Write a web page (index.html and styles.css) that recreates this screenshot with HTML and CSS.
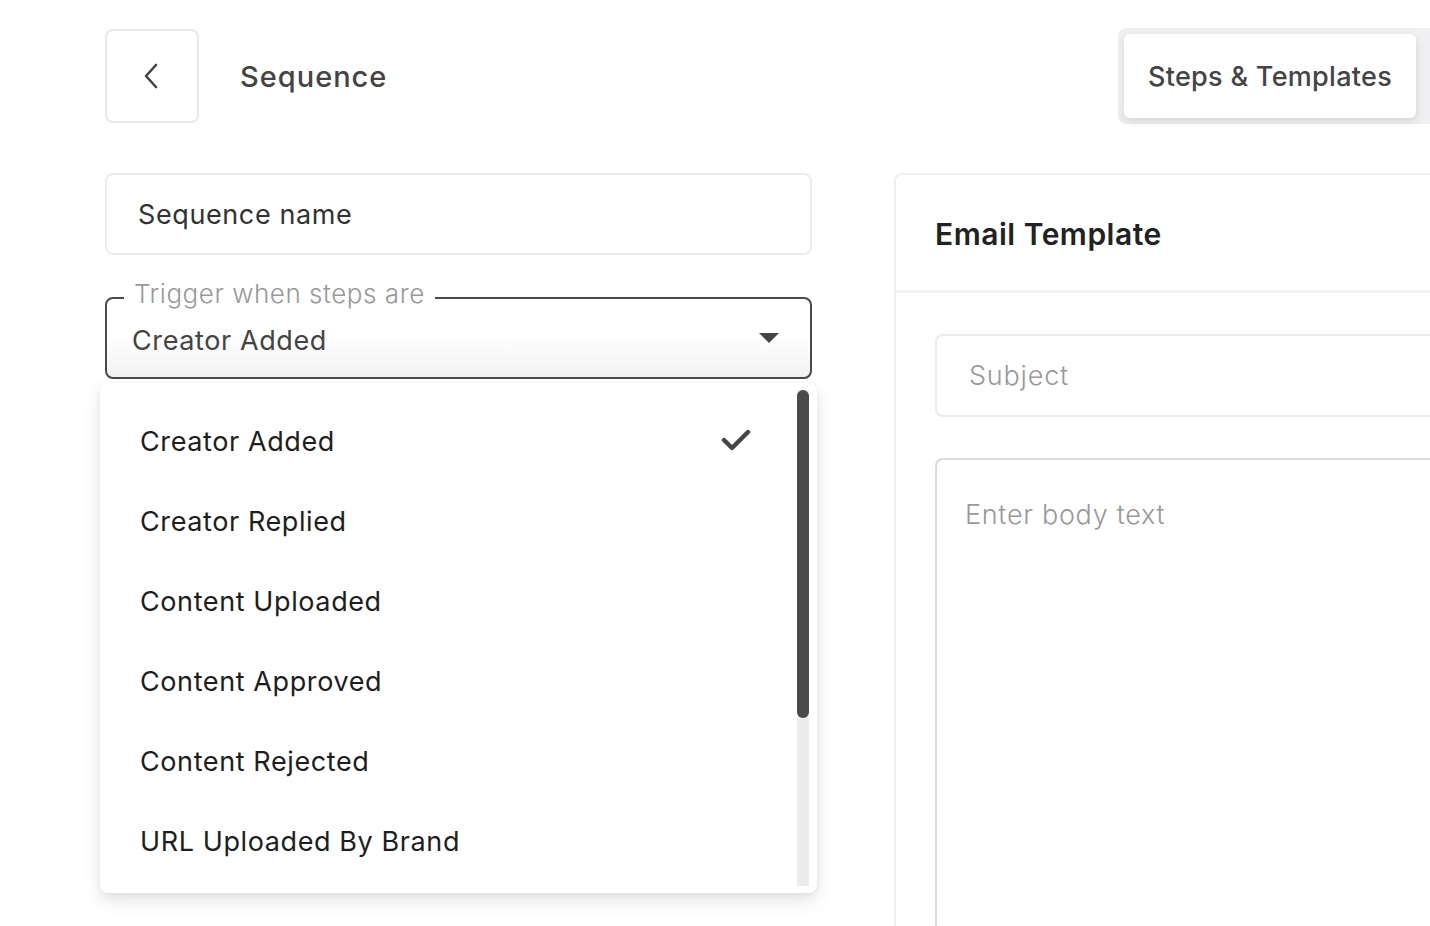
FILE: index.html
```html
<!DOCTYPE html>
<html>
<head>
<meta charset="utf-8">
<link rel="stylesheet" href="styles.css">
</head>
<body>
<div class="page">
  <header class="header">
    <button class="back-btn" aria-label="Back">
      <svg width="18" height="28" viewBox="0 0 18 28"><path d="M13 3 L3 14 L13 25" fill="none" stroke="#444" stroke-width="2.6" stroke-linecap="round" stroke-linejoin="round"/></svg>
    </button>
    <h1 class="title">Sequence</h1>
    <div class="tabs">
      <div class="tab active">Steps &amp; Templates</div>
    </div>
  </header>
  <main class="content">
    <section class="left">
      <div class="input">Sequence name</div>
      <div class="select-wrap">
        <div class="select">
          <span class="select-label">Trigger when steps are</span>
          <span class="select-value">Creator Added</span>
          <svg class="caret" width="20" height="10" viewBox="0 0 20 10"><path d="M0 0 L20 0 L10 10 Z" fill="#444"/></svg>
        </div>
        <div class="menu">
          <ul class="menu-list">
            <li class="menu-item selected">Creator Added
              <svg class="check" width="30" height="24" viewBox="0 0 30 24"><path d="M3 12 L11 20 L27 4" fill="none" stroke="#444" stroke-width="4.4" stroke-linecap="round" stroke-linejoin="round"/></svg>
            </li>
            <li class="menu-item">Creator Replied</li>
            <li class="menu-item">Content Uploaded</li>
            <li class="menu-item">Content Approved</li>
            <li class="menu-item">Content Rejected</li>
            <li class="menu-item">URL Uploaded By Brand</li>
          </ul>
          <div class="scroll-track"><div class="scroll-thumb"></div></div>
        </div>
      </div>
    </section>
    <section class="panel">
      <div class="panel-head">Email Template</div>
      <div class="panel-body">
        <div class="field subject">Subject</div>
        <div class="field body-text">Enter body text</div>
      </div>
    </section>
  </main>
</div>
</body>
</html>
```
FILE: styles.css
```css
* { box-sizing: border-box; }
html, body { margin: 0; padding: 0; background: #fff; }
body {
  width: 1430px;
  height: 926px;
  overflow: hidden;
  font-family: Inter, "Noto Sans", sans-serif;
  color: #333;
}
.page {
  padding: 28px 0 0 105px;
}
.header {
  display: flex;
  align-items: center;
  height: 96px;
  margin-right: -20px;
}
.back-btn {
  width: 94px;
  height: 94px;
  border: 2px solid #e6e8ec;
  border-radius: 8px;
  background: #fff;
  display: flex;
  align-items: center;
  justify-content: center;
  padding: 0;
}
.title {
  margin: 0 0 0 41px;
  font-size: 29px;
  font-weight: 500;
  letter-spacing: 1px;
  color: #444;
}
.tabs {
  margin-left: auto;
  background: #f0f0f2;
  border-radius: 8px 0 0 8px;
  padding: 6px 34px 6px 6px;
  height: 96px;
}
.tab {
  width: 292px;
  height: 84px;
  background: #fff;
  border-radius: 6px;
  box-shadow: 0 3px 8px rgba(0,0,0,0.12);
  display: flex;
  align-items: center;
  justify-content: center;
  font-size: 27px;
  font-weight: 500;
  letter-spacing: 0.3px;
  color: #444;
}
.content {
  display: flex;
  gap: 82px;
  margin-top: 49px;
}
.left {
  width: 707px;
  flex: none;
  display: flex;
  flex-direction: column;
  gap: 42px;
}
.input {
  height: 82px;
  border: 2px solid #ececec;
  border-radius: 8px;
  display: flex;
  align-items: center;
  padding-left: 31px;
  font-size: 27px;
  letter-spacing: 0.6px;
  color: #333;
}
.select-wrap { position: relative; }
.select {
  position: relative;
  height: 82px;
  border: 2px solid #4a4a4a;
  border-radius: 8px;
  background: linear-gradient(to bottom, #fff 45%, #f2f2f2 100%);
  display: flex;
  align-items: center;
  padding: 4px 31px 0 25px;
}
.select-label {
  position: absolute;
  left: 17px;
  top: -20px;
  padding: 0 10px;
  background: #fff;
  font-size: 26px;
  font-weight: 300;
  letter-spacing: 0.55px;
  color: #999;
  line-height: 30px;
}
.select-value {
  font-size: 27px;
  letter-spacing: 0.6px;
  color: #444;
  flex: 1;
}
.caret { flex: none; margin-top: -4px; }
.menu {
  position: absolute;
  left: -5px;
  top: 86px;
  width: 717px;
  height: 510px;
  background: #fff;
  border-radius: 8px;
  box-shadow: 0 8px 18px rgba(0,0,0,0.10), 0 2px 6px rgba(0,0,0,0.06);
  z-index: 10;
}
.menu-list {
  list-style: none;
  margin: 0;
  padding: 18px 0 0 0;
}
.menu-item {
  height: 80px;
  display: flex;
  align-items: center;
  padding-left: 40px;
  padding-right: 66px;
  font-size: 27px;
  letter-spacing: 0.6px;
  color: #1e1e1e;
}
.menu-item .check { margin-left: auto; margin-top: -2px; }
.scroll-track {
  position: absolute;
  right: 8px;
  top: 7px;
  width: 12px;
  height: 496px;
  background: #ececec;
}
.scroll-thumb {
  height: 328px;
  background: #4a4a4a;
  border-radius: 6px;
}
.panel {
  flex: 1;
  min-width: 600px;
  height: 800px;
  border: 2px solid #efefef;
  border-right: none;
  border-radius: 8px 0 0 0;
}
.panel-head {
  height: 118px;
  display: flex;
  align-items: center;
  padding-left: 39px;
  padding-top: 2px;
  font-size: 30px;
  font-weight: 600;
  letter-spacing: 0.5px;
  color: #222;
  border-bottom: 3px solid #f3f3f5;
}
.panel-body {
  padding: 41px 0 0 39px;
  display: flex;
  flex-direction: column;
  gap: 41px;
}
.field {
  border: 2px solid #ececec;
  border-right: none;
  border-radius: 8px 0 0 8px;
  font-size: 27px;
  font-weight: 300;
  color: #999;
}
.subject {
  height: 83px;
  display: flex;
  align-items: center;
  padding-left: 32px;
  letter-spacing: 0.8px;
}
.body-text {
  height: 600px;
  border-color: #dcdcdc;
  padding: 38px 0 0 28px;
  letter-spacing: 0.7px;
}
```
